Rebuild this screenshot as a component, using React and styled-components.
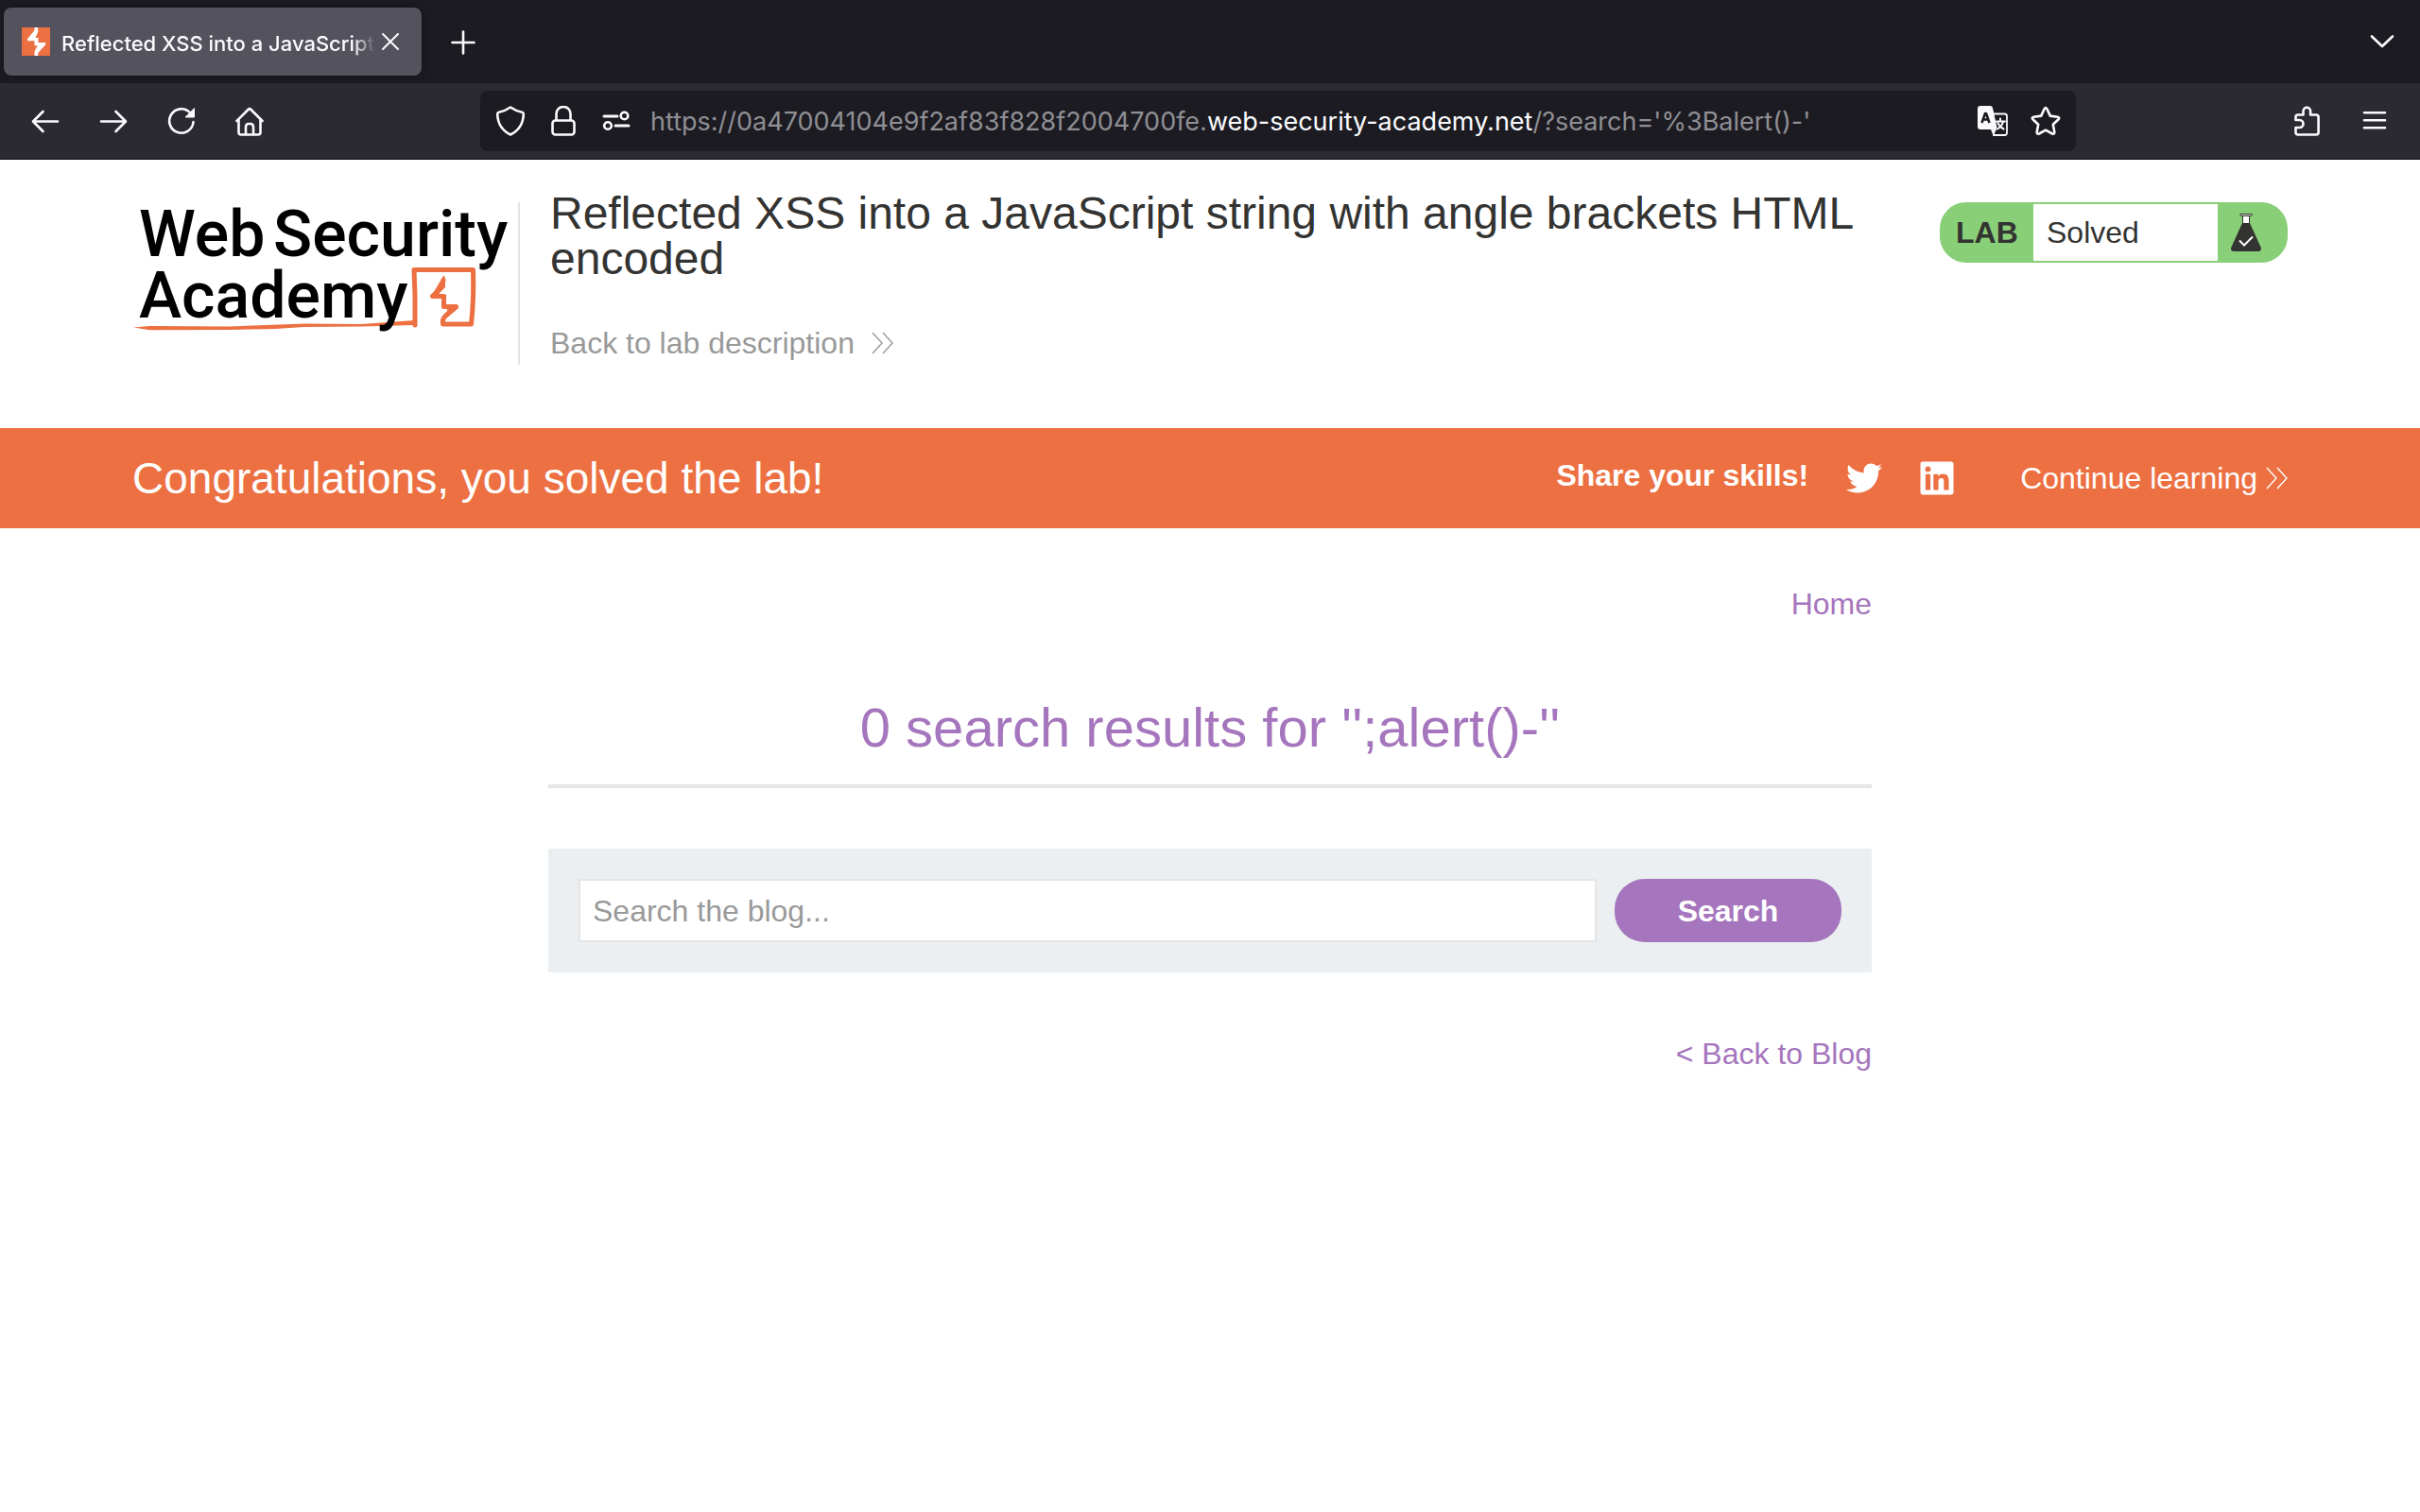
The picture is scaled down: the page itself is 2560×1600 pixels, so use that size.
import React from "react";
import styled, { createGlobalStyle, css } from "styled-components";
import { FaTwitter, FaLinkedin } from "react-icons/fa";

const ui = `Inter, "Liberation Sans", sans-serif`;
const sans = `"Liberation Sans", Arial, sans-serif`;

const GlobalStyle = createGlobalStyle`
  *, *::before, *::after { box-sizing: border-box; }
  body { margin: 0; background: #fff; color: #333332; font-family: ${sans}; font-size: 32px; line-height: 36px; }
  h1, h2, p { margin: 0; font-weight: 400; }
  a { text-decoration: none; }
  svg { display: block; flex: none; }
`;

/* ---------- browser chrome ---------- */

const TabStrip = styled.div`
  display: flex;
  align-items: center;
  gap: 12px;
  height: 88px;
  padding: 0 8px 0 4px;
  background: #1c1b22;
`;

const Tab = styled.div`
  display: flex;
  align-items: center;
  width: 442px;
  height: 72px;
  padding: 0 17px 0 18px;
  border-radius: 8px;
  background: #53525d;
  box-shadow: 0 0 8px rgba(0, 0, 0, 0.4);
`;

const TabTitle = styled.span`
  flex: 1;
  min-width: 0;
  margin-left: 11px;
  padding-top: 3px;
  overflow: hidden;
  white-space: nowrap;
  color: #fbfbfe;
  font: 500 22px/32px ${ui};
  mask-image: linear-gradient(to left, transparent, #000 24px);
`;

const IconButton = styled.button`
  display: grid;
  place-items: center;
  flex: none;
  width: ${(p) => p.$size || 64}px;
  height: ${(p) => p.$size || 64}px;
  padding: 0;
  border: 0;
  border-radius: 8px;
  background: none;
  color: #fbfbfe;
  &:hover { background: rgba(255, 255, 255, 0.1); }
`;

const Spacer = styled.div`
  flex: 1;
`;

const NavBar = styled.div`
  display: flex;
  align-items: center;
  height: 81px;
  padding: 0 16px;
  background: #2b2a33;
  border-bottom: 1px solid #0c0c0d;
`;

const ButtonGroup = styled.div`
  display: flex;
  flex: none;
  gap: 8px;
`;

const UrlBar = styled.div`
  display: flex;
  align-items: center;
  flex: 0 1 1688px;
  min-width: 0;
  height: 64px;
  padding: 0 4px;
  border-radius: 8px;
  background: #1c1b22;
`;

const Address = styled.div`
  flex: 1;
  min-width: 0;
  margin-left: 8px;
  padding-top: 2px;
  overflow: hidden;
  white-space: nowrap;
  color: #8f8f94;
  font: 400 27px/40px ${ui};
`;

const Domain = styled.span`
  color: #fbfbfe;
`;

const Stroke = ({ size = 32, width = 2.6, children }) => (
  <svg width={size} height={size} viewBox="0 0 32 32" fill="none" stroke="currentColor" strokeWidth={width} strokeLinecap="round" strokeLinejoin="round" aria-hidden="true">
    {children}
  </svg>
);

const Favicon = () => (
  <svg width="32" height="32" viewBox="0 0 32 32" aria-hidden="true">
    <rect x="1" y="1" width="30" height="30" fill="#ec7042" />
    <path d="M14.500 1h3.700v4.700L15.500 12h3v5h7.700v2.300L18.300 28v3h-3.800v-4.500l3.200-6.300h-3.200v-5H7v-2L14.500 4z" fill="#fff" />
  </svg>
);

const Back = () => (
  <Stroke><path d="M29 16.500H3M13.500 6 3 16.500 13.500 27" /></Stroke>
);
const Forward = () => (
  <Stroke><path d="M3 16.500h26M18.500 6 29 16.500 18.500 27" /></Stroke>
);
const Reload = () => (
  <Stroke>
    <path d="M28.500 17A12.700 12.700 0 1 1 25 7.200" />
    <path d="M29.500 3v9h-9z" fill="currentColor" strokeWidth="1" />
  </Stroke>
);
const Home = () => (
  <Stroke>
    <path d="M2.500 16 14.500 4q1.500-1.500 3 0l12 12" />
    <path d="M4.500 15v13q0 2.500 2.500 2.500h18q2.500 0 2.500-2.500V15" />
    <path d="M12 30V22.500q0-3.500 3-3.500h2q3 0 3 3.500V30" />
  </Stroke>
);
const Shield = () => (
  <Stroke><path d="M16 1.500q6.500 4.500 12.800 5.500 1 .4 1 2-.6 15-13.800 21.500Q2.800 24 2.200 9q0-1.600 1-2Q9.500 6 16 1.500z" /></Stroke>
);
const Lock = () => (
  <Stroke>
    <rect x="4.500" y="15.500" width="23" height="15" rx="3" />
    <path d="M8.500 15V8.500a7.500 7.500 0 0 1 15 0V15" />
  </Stroke>
);
const Permissions = () => (
  <Stroke>
    <path d="M3 11h14M15 21h14" strokeWidth="3" />
    <circle cx="24.500" cy="10.500" r="3.800" />
    <circle cx="7" cy="21" r="3.800" />
  </Stroke>
);
const Translate = () => (
  <Stroke>
    <path d="M3 0h10a3 3 0 0 1 3 2.200L20.500 23 16.800 32 14 25H3a3 3 0 0 1-3-3V3a3 3 0 0 1 3-3z" fill="currentColor" stroke="none" />
    <path d="M4.500 18 8 8h1l3.500 10M6 14.500h5.500" stroke="#1c1b22" strokeWidth="2.600" strokeLinecap="butt" />
    <path d="M17 8.500h11.500q2.500 0 2.500 2.500v17.500q0 2.500-2.500 2.500H17" strokeWidth="1.800" />
    <path d="M20 16.500h9M24 13.500v3M27 17q-1.500 5-6 7.500M21.500 18.500q2 4 6 6" strokeWidth="2" />
  </Stroke>
);
const Star = () => (
  <Stroke><path d="M14.600 3.300q1.400-2.400 2.800 0l3.400 7.300 7.900 1.100q2.500.6.900 2.500l-5.800 5.600 1.500 8q.1 2.500-2.300 1.700L16 25.700l-7 3.800q-2.400.8-2.300-1.700l1.500-8-5.800-5.600q-1.600-1.900.9-2.500l7.900-1.100z" /></Stroke>
);
const Puzzle = () => (
  <Stroke>
    <path d="M4.500 15V12q0-2.500 2.500-2.500h5.500V5.500a3.800 3.800 0 0 1 7.600 0v4h6q2.500 0 2.500 2.500v16q0 2.500-2.500 2.500H7Q4.500 30.500 4.500 28v-5h4a4 4 0 0 0 0-8z" />
  </Stroke>
);
const Menu = () => (
  <Stroke><path d="M5 7.200h22M5 15.200h22M5 23.200h22" /></Stroke>
);
const Close = () => (
  <Stroke width={2}><path d="m8 8 16 16M24 8 8 24" /></Stroke>
);
const Plus = () => (
  <Stroke><path d="M16 5.500v23M4.500 17h23" /></Stroke>
);
const Chevron = () => (
  <Stroke><path d="M5 10.500 16 21l11-10.500" /></Stroke>
);

/* ---------- lab header ---------- */

const LabHeader = styled.header`
  display: flex;
  align-items: flex-start;
  padding: 33px 140px 67px;
`;

const LogoLink = styled.a`
  flex: none;
  width: 410px;
  height: 172px;
  margin-top: 12px;
  border-right: 2px solid #e5e5e5;
`;

const LabInfo = styled.div`
  flex: 1;
  min-width: 0;
  margin: 0 32px;
`;

const LabTitle = styled.h2`
  font-size: 48px;
  line-height: 48px;
`;

const ArrowLink = styled.a`
  display: inline-flex;
  align-items: center;
  gap: ${(p) => p.$gap}px;
  color: ${(p) => p.$color};
`;

const BackRow = styled.p`
  margin-top: 47px;
`;

const Arrows = () => (
  <svg width="23" height="24" viewBox="0 0 23 24" fill="none" stroke="currentColor" strokeWidth="1.400" aria-hidden="true">
    <path d="M1 1l10 11L1 23M12 1l10 11-10 11" />
  </svg>
);

const Status = styled.div`
  display: flex;
  flex: none;
  width: 368px;
  height: 64px;
  margin-top: 12px;
  overflow: hidden;
  border: 2px solid #89cf78;
  border-radius: 28px;
  background: #89cf78;
  line-height: 60px;
`;

const StatusLabel = styled.strong`
  width: 97px;
  padding-left: 15px;
`;

const StatusText = styled.span`
  width: 195px;
  padding-left: 14px;
  background: #fff;
`;

const Flask = styled.svg`
  margin: 10px 0 0 14px;
`;

const Logo = () => (
  <svg width="400" height="140" viewBox="0 0 400 140" role="img" aria-label="Web Security Academy">
    <path d="M299 130V99L298 71.500h62.500q1 30-2 57.500H328.500q-1-5 3-9l11-9.500H329.500V99.500H317.500q11-9 11.500-17" fill="none" stroke="#ec7042" strokeWidth="5" strokeLinejoin="round" strokeLinecap="round" />
    <path d="M329 78l1.500 0 .5 12-8 8h9v12h11l2 2-12 10v-10h-6V101h-9l-1-3z" fill="#ec7042" />
    <path d="M1 132.500 18 131l84 .5 80-3 60 .5 56-4 .5 5-55 1.500-62 .5-30 2-50 1-83 .2z" fill="#ec7042" />
    <g fontFamily="Roboto, sans-serif" fontSize="68" fontWeight="500" fill="#000">
      <text x="7" y="57">Web</text>
      <text x="149" y="57">Security</text>
      <text x="7" y="122">Academy</text>
    </g>
  </svg>
);

/* ---------- solved banner ---------- */

const Banner = styled.section`
  display: flex;
  align-items: center;
  height: 106px;
  padding: 0 140px;
  background: #ec7042;
  color: #fff;
`;

const BannerTitle = styled.p`
  flex: 1;
  font-size: 46px;
  line-height: 52px;
`;

const Share = styled.strong`
  padding-bottom: 6px;
  margin-right: 40px;
`;

const SocialLink = styled.a`
  margin-right: ${(p) => p.$gap}px;
  color: #fff;
`;

/* ---------- blog ---------- */

const Main = styled.main`
  width: 100%;
  max-width: 1400px;
  margin: 0 auto;
  padding: 62px 0 64px;
`;

const LinkRow = styled.nav`
  display: flex;
  justify-content: flex-end;
`;

const PurpleLink = styled.a`
  color: #a575bd;
`;

const ResultTitle = styled.h1`
  margin: 81px 0 64px;
  padding-bottom: 28px;
  border-bottom: 4px solid #e5e5e5;
  color: #a575bd;
  font-size: 58px;
  line-height: 64px;
  text-align: center;
`;

const SearchForm = styled.form`
  display: flex;
  gap: 19px;
  margin-bottom: 68px;
  padding: 32px;
  background: #ebeff2;
`;

const field = css`
  height: 67px;
  font-family: ${sans};
  font-size: 32px;
`;

const SearchInput = styled.input`
  ${field}
  flex: 1;
  min-width: 0;
  padding: 2px 13px 0;
  border: 2px solid #e5e5e5;
  border-radius: 0;
  background: #fff;
  color: #333332;
  &::placeholder { color: #999; opacity: 1; }
`;

const SearchButton = styled.button`
  ${field}
  width: 240px;
  padding: 2px 0 0;
  border: 0;
  border-radius: 32px;
  background: #a575bd;
  color: #fff;
  font-weight: 700;
`;

export default function App() {
  return (
    <>
      <GlobalStyle />
      <TabStrip>
        <Tab>
          <Favicon />
          <TabTitle>Reflected XSS into a JavaScript</TabTitle>
          <IconButton $size={32} aria-label="Close tab"><Close /></IconButton>
        </Tab>
        <IconButton aria-label="New tab"><Plus /></IconButton>
        <Spacer />
        <IconButton aria-label="List all tabs"><Chevron /></IconButton>
      </TabStrip>
      <NavBar>
        <ButtonGroup>
          <IconButton aria-label="Back"><Back /></IconButton>
          <IconButton aria-label="Forward"><Forward /></IconButton>
          <IconButton aria-label="Reload"><Reload /></IconButton>
          <IconButton aria-label="Home"><Home /></IconButton>
        </ButtonGroup>
        <Spacer />
        <UrlBar>
          <IconButton $size={56} aria-label="Tracking protection"><Shield /></IconButton>
          <IconButton $size={56} aria-label="Site security"><Lock /></IconButton>
          <IconButton $size={56} aria-label="Permissions"><Permissions /></IconButton>
          <Address role="textbox" tabIndex={0} aria-label="Address">
            https://0a47004104e9f2af83f828f2004700fe.<Domain>web-security-academy.net</Domain>/?search='%3Balert()-'
          </Address>
          <IconButton $size={56} aria-label="Translate page"><Translate /></IconButton>
          <IconButton $size={56} aria-label="Bookmark this page"><Star /></IconButton>
        </UrlBar>
        <Spacer />
        <ButtonGroup>
          <IconButton aria-label="Extensions"><Puzzle /></IconButton>
          <IconButton aria-label="Open menu"><Menu /></IconButton>
        </ButtonGroup>
      </NavBar>

      <LabHeader>
        <LogoLink href="#academy"><Logo /></LogoLink>
        <LabInfo>
          <LabTitle>Reflected XSS into a JavaScript string with angle brackets HTML encoded</LabTitle>
          <BackRow>
            <ArrowLink href="#description" $gap={18} $color="#999">Back to lab description<Arrows /></ArrowLink>
          </BackRow>
        </LabInfo>
        <Status>
          <StatusLabel>LAB</StatusLabel>
          <StatusText>Solved</StatusText>
          <Flask width="32" height="40" viewBox="0 0 32 40" aria-hidden="true">
            <path d="M12.500 2.500h7v8h-7z" fill="#fff" stroke="#333332" />
            <path d="M10 .5h12v1.800H10z" fill="#fff" stroke="#333332" />
            <path d="M12 10h8l12 26.500q0 3.500-3 3.500H3q-3 0-3-3.500z" fill="#333332" />
            <path d="m9 28.500 5 5 9-9" fill="none" stroke="#fff" strokeWidth="2" />
          </Flask>
        </Status>
      </LabHeader>

      <Banner>
        <BannerTitle>Congratulations, you solved the lab!</BannerTitle>
        <Share>Share your skills!</Share>
        <SocialLink href="#twitter" aria-label="Twitter" $gap={38}><FaTwitter size={38} /></SocialLink>
        <SocialLink href="#linkedin" aria-label="LinkedIn" $gap={68}><FaLinkedin size={40} /></SocialLink>
        <ArrowLink href="#continue" $gap={9} $color="#fff">Continue learning<Arrows /></ArrowLink>
      </Banner>

      <Main>
        <LinkRow><PurpleLink href="#home">Home</PurpleLink></LinkRow>
        <ResultTitle>0 search results for '';alert()-''</ResultTitle>
        <SearchForm onSubmit={(e) => e.preventDefault()}>
          <SearchInput type="text" name="search" placeholder="Search the blog..." aria-label="Search the blog" />
          <SearchButton type="submit">Search</SearchButton>
        </SearchForm>
        <LinkRow><PurpleLink href="#blog">&lt; Back to Blog</PurpleLink></LinkRow>
      </Main>
    </>
  );
}
